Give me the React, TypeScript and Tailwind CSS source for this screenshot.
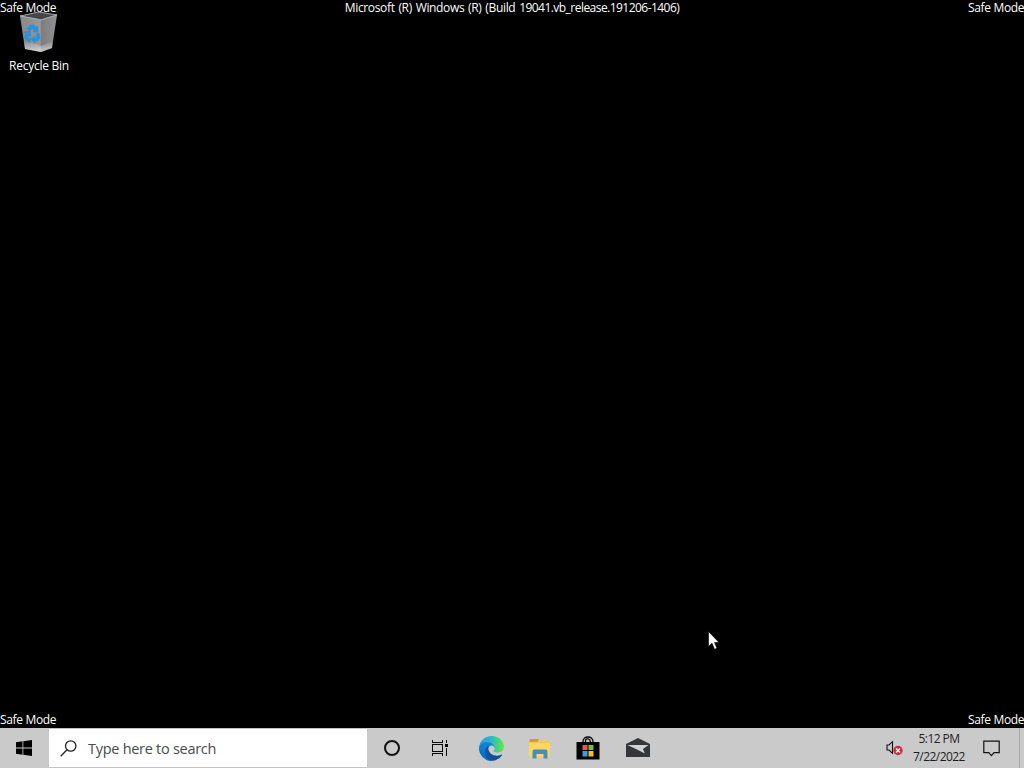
import type { ReactNode } from "react";

function RecycleBinIcon() {
  return (
    <svg width="40" height="42" viewBox="0 0 40 42">
      <defs>
        <linearGradient id="bin" x1="0" x2="1">
          <stop offset="0" stopColor="#87888a" />
          <stop offset="0.55" stopColor="#98989a" />
          <stop offset="0.57" stopColor="#7d7d7f" />
          <stop offset="1" stopColor="#929294" />
        </linearGradient>
        <linearGradient id="glow" x1="0" x2="0" y1="0" y2="1">
          <stop offset="0" stopColor="#fff" stopOpacity="0" />
          <stop offset="1" stopColor="#fff" stopOpacity="0.6" />
        </linearGradient>
      </defs>
      <path d="M1 5 20 1 38 4 22 9Z" fill="#454648" stroke="#a9a9ab" strokeWidth="1" />
      <path d="M1 5 22 9 38 4 33 37 22 41 6 38Z" fill="url(#bin)" />
      <path d="M4.500 31 14 32 22 35 34 30 33 37 22 41 6 38Z" fill="url(#glow)" />
      <path d="M1 5 22 9 38 4" fill="none" stroke="#b4b4b6" strokeWidth="0.800" />
      <g fill="#2d91da" stroke="#2d91da" strokeWidth="0.800">
        <path d="M8 18 11 14 15 14 17 17 18 15 19 21 14 21 15 19 13 17 11 20Z" />
        <path d="M5 21 11 20 12 25 10 24 9 27 12 28 11 31 7 29 5 26 7 23Z" />
        <path d="M17 23 20 22 21 27 19 30 16 30 16 32 12 28 16 25 16 27 18 27Z" />
      </g>
    </svg>
  );
}

function WindowsIcon() {
  return (
    <svg width="16" height="16" viewBox="0 0 16 16" fill="#000">
      <path d="M0 2.300 6.500 1.300V7.600H0ZM7.300 1.200 16 0V7.600H7.300ZM0 8.400H6.500V14.700L0 13.800ZM7.300 8.400H16V16L7.300 14.800Z" />
    </svg>
  );
}

function SearchIcon() {
  return (
    <svg width="17" height="17" viewBox="0 0 17 17" fill="none" stroke="#222" strokeWidth="1.300">
      <circle cx="10.700" cy="6" r="5.200" />
      <path d="M7 9.800.7 16.200" />
    </svg>
  );
}

function TaskViewIcon() {
  return (
    <svg width="16" height="16" viewBox="0 0 16 16" fill="none" stroke="#0a0a0a" strokeWidth="1" shapeRendering="crispEdges">
      <path d="M.5 0V2.500H10.500V0M.5 16V13.500H10.500V16M.5 4.500H10.500V11.500H.5ZM14.500 0V3M14.500 8V16" />
      <path d="M13 4h3v3h-3z" fill="#0a0a0a" stroke="none" />
    </svg>
  );
}

function EdgeIcon() {
  return (
    <svg width="25" height="25" viewBox="0 0 256 256">
      <defs>
        <linearGradient id="e1" x1="63" x2="242" y1="178" y2="178" gradientUnits="userSpaceOnUse">
          <stop offset="0" stopColor="#0c59a4" />
          <stop offset="1" stopColor="#114a8b" />
        </linearGradient>
        <linearGradient id="e2" x1="153" x2="46" y1="100" y2="220" gradientUnits="userSpaceOnUse">
          <stop offset="0" stopColor="#1585cf" />
          <stop offset="0.5" stopColor="#127fd3" />
          <stop offset="1" stopColor="#0671c4" />
        </linearGradient>
        <linearGradient id="e3" x1="10" x2="250" y1="85" y2="90" gradientUnits="userSpaceOnUse">
          <stop offset="0" stopColor="#279fdd" />
          <stop offset="0.45" stopColor="#2fb5d2" />
          <stop offset="0.75" stopColor="#44d37e" />
          <stop offset="1" stopColor="#66e34e" />
        </linearGradient>
      </defs>
      <path fill="url(#e2)" d="M105.700 241.400a79.200 79.200 0 0 1-22.700-21.300 80.700 80.700 0 0 1 29.500-120c3.100-1.500 8.500-4.100 15.600-4a32.400 32.400 0 0 1 25.700 13 31.900 31.900 0 0 1 6.300 18.700c0-.2 24.500-79.600-80-79.600C36.200 48.200 0 89.900 0 126.400a130.200 130.200 0 0 0 12.100 56 128 128 0 0 0 156.400 67.100 75.500 75.500 0 0 1-62.700-8Z" />
      <path fill="url(#e1)" d="M231 190.500c-3.400 1.800-6.900 3.400-10.500 4.700a101.900 101.900 0 0 1-35.900 6.500c-47.300 0-88.500-32.500-88.500-74.300a31.500 31.500 0 0 1 16.400-27.300c-42.800 1.800-53.800 46.400-53.800 72.500 0 73.900 68.100 81.400 82.800 81.400 7.900 0 19.800-2.300 27-4.600l1.300-.4a128.300 128.300 0 0 0 66.600-52.800 4 4 0 0 0-5.400-5.700Z" />
      <path fill="url(#e3)" d="M152.300 148.900c-.8 1-3.300 2.500-3.300 5.700 0 2.600 1.700 5.100 4.700 7.200 14.400 10 41.500 8.700 41.600 8.700a59.600 59.600 0 0 0 30.300-8.300 61.400 61.400 0 0 0 30.400-52.900c.3-22.400-8-37.300-11.300-43.900C223.500 23.900 177.700 0 128 0A128 128 0 0 0 0 126.200c.5-36.500 36.800-66 80-66 3.500 0 23.500.3 42 10 16.300 8.600 24.900 18.900 30.800 29.200 6.200 10.700 7.300 24.100 7.300 29.500 0 5.300-2.700 13.300-7.800 20Z" />
    </svg>
  );
}

function FolderIcon() {
  return (
    <svg width="24" height="22" viewBox="0 0 24 22">
      <path d="M1 2.500H22V18.500H1Z" fill="#f6ca45" />
      <path d="M1 5H22V18.500H1Z" fill="#fbd662" />
      <path d="M1.500 1H11L9.500 4H1.500Z" fill="#cf9f35" />
      <path d="M4.500 13.500Q4.500 11.500 6.500 11.500H17.500Q19.500 11.500 19.500 13.500V20.500H15.500V16H8.500V20.500H4.500Z" fill="#438fbd" />
    </svg>
  );
}

function StoreIcon() {
  return (
    <svg width="24" height="24" viewBox="0 0 24 24">
      <path d="M7 7V5.500C7 3 9 1 12 1S17 3 17 5.500V7M9.500 7V5C9.500 3 11 2.500 12.500 3S14.500 4.500 14.500 7" fill="none" stroke="#050505" strokeWidth="1.300" />
      <path d="M.5 6H23.500V23.500H.5Z" fill="#030303" />
      <path d="M6.500 9H11.500V14H6.500Z" fill="#e85b4a" />
      <path d="M12.500 9H17.500V14H12.500Z" fill="#80b935" />
      <path d="M6.500 15H11.500V20.500H6.500Z" fill="#2ea2e2" />
      <path d="M12.500 15H17.500V20.500H12.500Z" fill="#f9bd20" />
    </svg>
  );
}

function MailIcon() {
  return (
    <svg width="24" height="20" viewBox="0 0 24 20">
      <path d="M0 6 12 0 24 6V19H0Z" fill="#353637" />
      <path d="M1.500 7H22.500L17 11 18.800 15.500 12.500 12.300Z" fill="#d2d2d2" />
    </svg>
  );
}

function VolumeIcon() {
  return (
    <svg width="18" height="16" viewBox="0 0 18 16">
      <path d="M1 5H3L6.500 1.700V13.300L3 10H1Z" fill="none" stroke="#111" strokeWidth="1.100" />
      <circle cx="12" cy="10.500" r="4.700" fill="#cb303d" />
      <path d="M10 8.500 14 12.500M14 8.500 10 12.500" stroke="#fff" strokeWidth="1.300" />
    </svg>
  );
}

function NotificationIcon() {
  return (
    <svg width="17" height="17" viewBox="0 0 17 17" fill="none" stroke="#111" strokeWidth="1.200">
      <path d="M.8 1.100H16.200V12.700H11L8.400 15.700 5.800 12.700H.8Z" />
    </svg>
  );
}

function TaskButton({ children, label }: { children: ReactNode; label: string }) {
  return (
    <button aria-label={label} className="flex h-10 w-[49px] items-center justify-center">
      {children}
    </button>
  );
}

function SafeMode() {
  return <span className="w-[56px] whitespace-nowrap tracking-[-0.34px]">Safe Mode</span>;
}

export default function App() {
  return (
    <div className="relative flex h-screen w-full flex-col overflow-hidden bg-black font-['Open_Sans','Noto_Sans',sans-serif] text-[12px] leading-4 text-white">
      <header className="flex h-4 justify-between">
        <SafeMode />
        <span className="whitespace-nowrap tracking-[-0.34px] [word-spacing:1px]">
          Microsoft (R) Windows (R) (Build <span className="tracking-[-0.54px]">19041.vb_release.191206-1406)</span>
        </span>
        <SafeMode />
      </header>

      <div className="absolute left-0 top-[11px] flex w-[78px] flex-col items-center">
        <RecycleBinIcon />
        <span className="mt-[5px] whitespace-nowrap tracking-[-0.25px]">Recycle Bin</span>
      </div>

      <main className="flex-1" />

      <div className="flex h-4 justify-between">
        <SafeMode />
        <SafeMode />
      </div>

      <footer className="flex h-10 shrink-0 bg-[#cacaca] text-[#1d1d1d]">
        <button aria-label="Start" className="flex w-[49px] items-center justify-center pr-px">
          <WindowsIcon />
        </button>
        <div className="flex w-[318px] items-center gap-[11px] border-b border-t border-[#c4c4c4] bg-white pl-[11px]">
          <SearchIcon />
          <span className="mt-px whitespace-nowrap text-[14.5px] leading-5 tracking-[-0.28px] text-[#4a4a4a]">
            Type here to search
          </span>
        </div>
        <nav className="flex">
          <TaskButton label="Cortana">
            <span className="ml-px size-4 rounded-full border-2 border-[#111]" />
          </TaskButton>
          <TaskButton label="Task view">
            <span className="pr-px">
              <TaskViewIcon />
            </span>
          </TaskButton>
          <TaskButton label="Edge">
            <span className="pl-[3px]">
              <EdgeIcon />
            </span>
          </TaskButton>
          <TaskButton label="File Explorer">
            <span className="pl-[3px] pt-[2px]">
              <FolderIcon />
            </span>
          </TaskButton>
          <TaskButton label="Store">
            <span className="pl-px">
              <StoreIcon />
            </span>
          </TaskButton>
          <TaskButton label="Mail">
            <span className="pb-px pl-[2px]">
              <MailIcon />
            </span>
          </TaskButton>
        </nav>
        <div className="ml-auto flex items-center">
          <VolumeIcon />
          <div className="ml-[8px] flex w-[54px] flex-col items-center whitespace-nowrap leading-[18px] tracking-[-0.55px]">
            <span>5:12 PM</span>
            <span>7/22/2022</span>
          </div>
          <div className="ml-[17px] mr-[19px]">
            <NotificationIcon />
          </div>
          <div className="h-10 w-[5px] border-l border-[#aaa]" />
        </div>
      </footer>

      <svg className="absolute left-[708px] top-[631px]" width="12" height="20" viewBox="0 0 12 20">
        <path d="M.5.500V15.500L4 12.300 6.500 18.300 9 17.300 6.500 11.500H11Z" fill="#fff" stroke="#000" strokeWidth="0.600" />
      </svg>
    </div>
  );
}
